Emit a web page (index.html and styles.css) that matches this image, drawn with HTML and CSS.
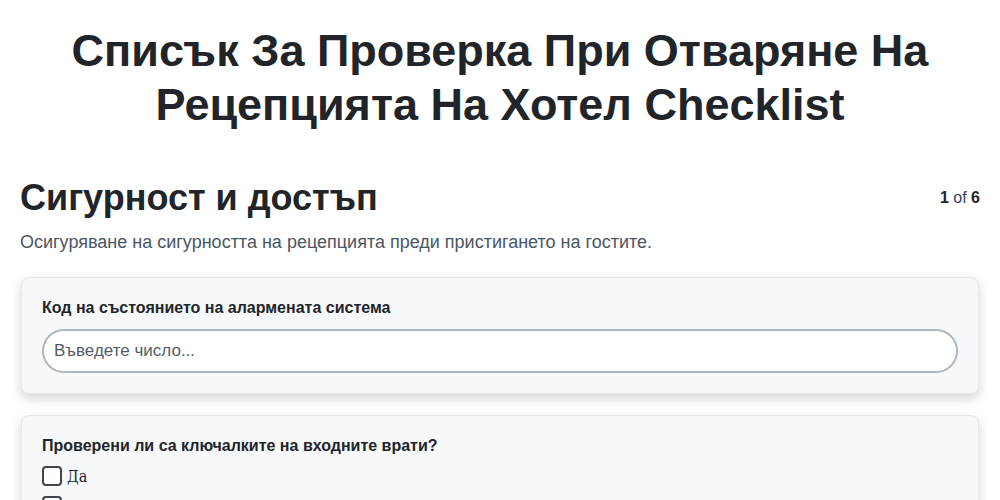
FILE: index.html
```html
<!DOCTYPE html>
<html lang="bg">

<head>
    <meta charset="UTF-8">
    <meta name="viewport" content="width=device-width, initial-scale=1.0">
    <title>Checklist</title>

    <link rel="stylesheet" href="styles.css">
</head>

<body>

    <div class="page">
        <h1 class="title">Списък За Проверка При Отваряне На Рецепцията На Хотел Checklist</h1>

        <div class="section-head">
            <h2 class="section-title">Сигурност и достъп</h2>
            <div class="counter"><b>1</b> of <b>6</b></div>
        </div>
        <p class="section-desc">Осигуряване на сигурността на рецепцията преди пристигането на гостите.</p>

        <div class="card">
            <label class="q-label" for="alarm">Код на състоянието на алармената система</label>
            <input type="number" class="inpu" id="alarm" placeholder="Въведете число...">
        </div>

        <div class="card">
            <div class="q-label">Проверени ли са ключалките на входните врати?</div>
            <label class="check"><input type="checkbox" class="box"> <span class="check-text">Да</span></label>
            <label class="check"><input type="checkbox" class="box"> <span class="check-text">Не</span></label>
        </div>
    </div>

</body>

</html>
```

FILE: styles.css
```css
body {
    margin: 0;
    font-family: "Liberation Sans", Arial, sans-serif;
    color: #212529;
    background: #fff;
}

.page {
    padding: 0 20px;
}

.title {
    margin: 24px 30px 0;
    font-size: 45px;
    line-height: 54px;
    text-align: center;
    font-weight: bold;
}

.section-head {
    display: flex;
    justify-content: space-between;
    align-items: center;
    margin-top: 44px;
}

.section-title {
    margin: 0;
    font-size: 36px;
    line-height: 44px;
    font-weight: bold;
}

.counter {
    font-size: 16px;
    color: #374151;
}

.counter b {
    color: #212529;
}

.section-desc {
    margin: 10px 0 23px;
    font-size: 18px;
    line-height: 24px;
    color: #4b5563;
}

.card {
    background: #f7f8fa;
    border: 1px solid #e5e7eb;
    border-radius: 8px;
    box-shadow: 0 5px 12px rgba(0, 0, 0, 0.17);
    padding: 20px 20px 20px 20px;
    margin: 0 1px 21px;
}

.q-label {
    display: block;
    font-size: 16px;
    font-weight: bold;
    line-height: 20px;
    margin-bottom: 11px;
}

.inpu {
    display: block;
    box-sizing: border-box;
    width: 100%;
    height: 44px;
    border: 2px solid #adb5bd;
    border-radius: 22px;
    padding: 0 10px;
    font-family: "Liberation Sans", Arial, sans-serif;
    font-size: 17px;
    background: #fff;
    -moz-appearance: textfield;
}

.inpu::placeholder {
    color: #555b66;
}

.inpu::-webkit-outer-spin-button,
.inpu::-webkit-inner-spin-button {
    -webkit-appearance: none;
    margin: 0;
}

.card .q-label + .check {
    margin-top: -2px;
}

.check {
    display: flex;
    align-items: center;
    gap: 5px;
    height: 22px;
    margin-bottom: 8px;
}

.box {
    appearance: none;
    -webkit-appearance: none;
    margin: 0;
    width: 20px;
    height: 20px;
    border: 2px solid #3f4452;
    border-radius: 4px;
    background: #fff;
    box-sizing: border-box;
}

.check-text {
    font-family: "DejaVu Serif Condensed", "DejaVu Serif", serif;
    font-stretch: condensed;
    font-size: 16px;
}
```
